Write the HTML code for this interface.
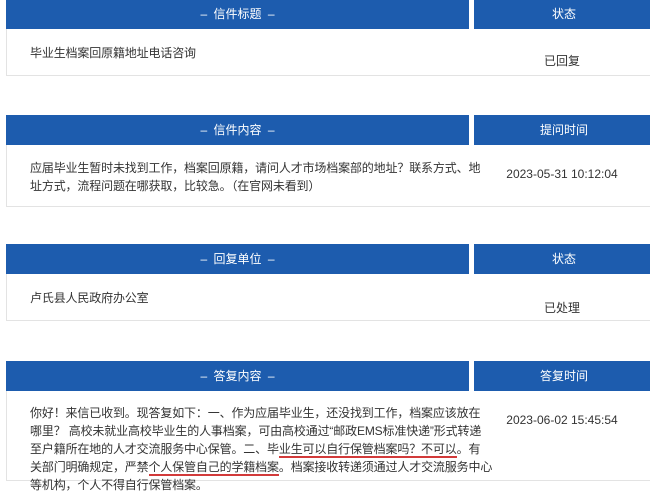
<!DOCTYPE html>
<html><head><meta charset="utf-8">
<style>
body{margin:0;background:#fff;width:650px;height:471px;overflow:hidden;position:relative;font-family:"Liberation Sans","Noto Sans CJK SC",sans-serif;font-size:12px;color:#333}
.h{position:absolute;background:#1d5cae;color:#fff;text-align:center;height:30px;line-height:30px;word-spacing:3px}
.l{left:6px;width:463px}
.r{left:474px;width:180px}
.b{position:absolute;left:6px;width:660px;border:1px solid #e3e3e3;border-top:none;box-sizing:border-box}
.t{position:absolute;left:30px;width:440px;line-height:18px;letter-spacing:-0.15px;white-space:nowrap}
.rt{position:absolute;left:474px;width:176px;text-align:center}
.u{border-bottom:2px solid #d23a3a}
</style></head><body>
<div class="h l" style="top:0;height:29px;line-height:29px">– 信件标题 –</div>
<div class="h r" style="top:0;height:29px;line-height:29px">状态</div>
<div class="b" style="top:29px;height:47px"></div>
<div class="t" style="top:44px">毕业生档案回原籍地址电话咨询</div>
<div class="rt" style="top:52px">已回复</div>

<div class="h l" style="top:115px">– 信件内容 –</div>
<div class="h r" style="top:115px">提问时间</div>
<div class="b" style="top:145px;height:62px"></div>
<div class="t" style="top:159px">应届毕业生暂时未找到工作，档案回原籍，请问人才市场档案部的地址？联系方式、地<br>址方式，流程问题在哪获取，比较急。（在官网未看到）</div>
<div class="rt" style="top:167px">2023-05-31 10:12:04</div>

<div class="h l" style="top:244px">– 回复单位 –</div>
<div class="h r" style="top:244px">状态</div>
<div class="b" style="top:274px;height:47px"></div>
<div class="t" style="top:289px">卢氏县人民政府办公室</div>
<div class="rt" style="top:299px">已处理</div>

<div class="h l" style="top:361px">– 答复内容 –</div>
<div class="h r" style="top:361px">答复时间</div>
<div class="b" style="top:391px;height:90px"></div>
<div class="t" style="top:404px">你好！来信已收到。现答复如下：一、作为应届毕业生，还没找到工作，档案应该放在<br>哪里？ 高校未就业高校毕业生的人事档案，可由高校通过“邮政EMS标准快递”形式转递<br>至户籍所在地的人才交流服务中心保管。二、毕<span class="u">业生可以自行保管档案吗？不可以</span>。有<br>关部门明确规定，严禁<span class="u">个人保管自己的学籍档案</span>。档案接收转递须通过人才交流服务中心<br>等机构，个人不得自行保管档案。</div>
<div class="rt" style="top:413px">2023-06-02 15:45:54</div>
</body></html>
